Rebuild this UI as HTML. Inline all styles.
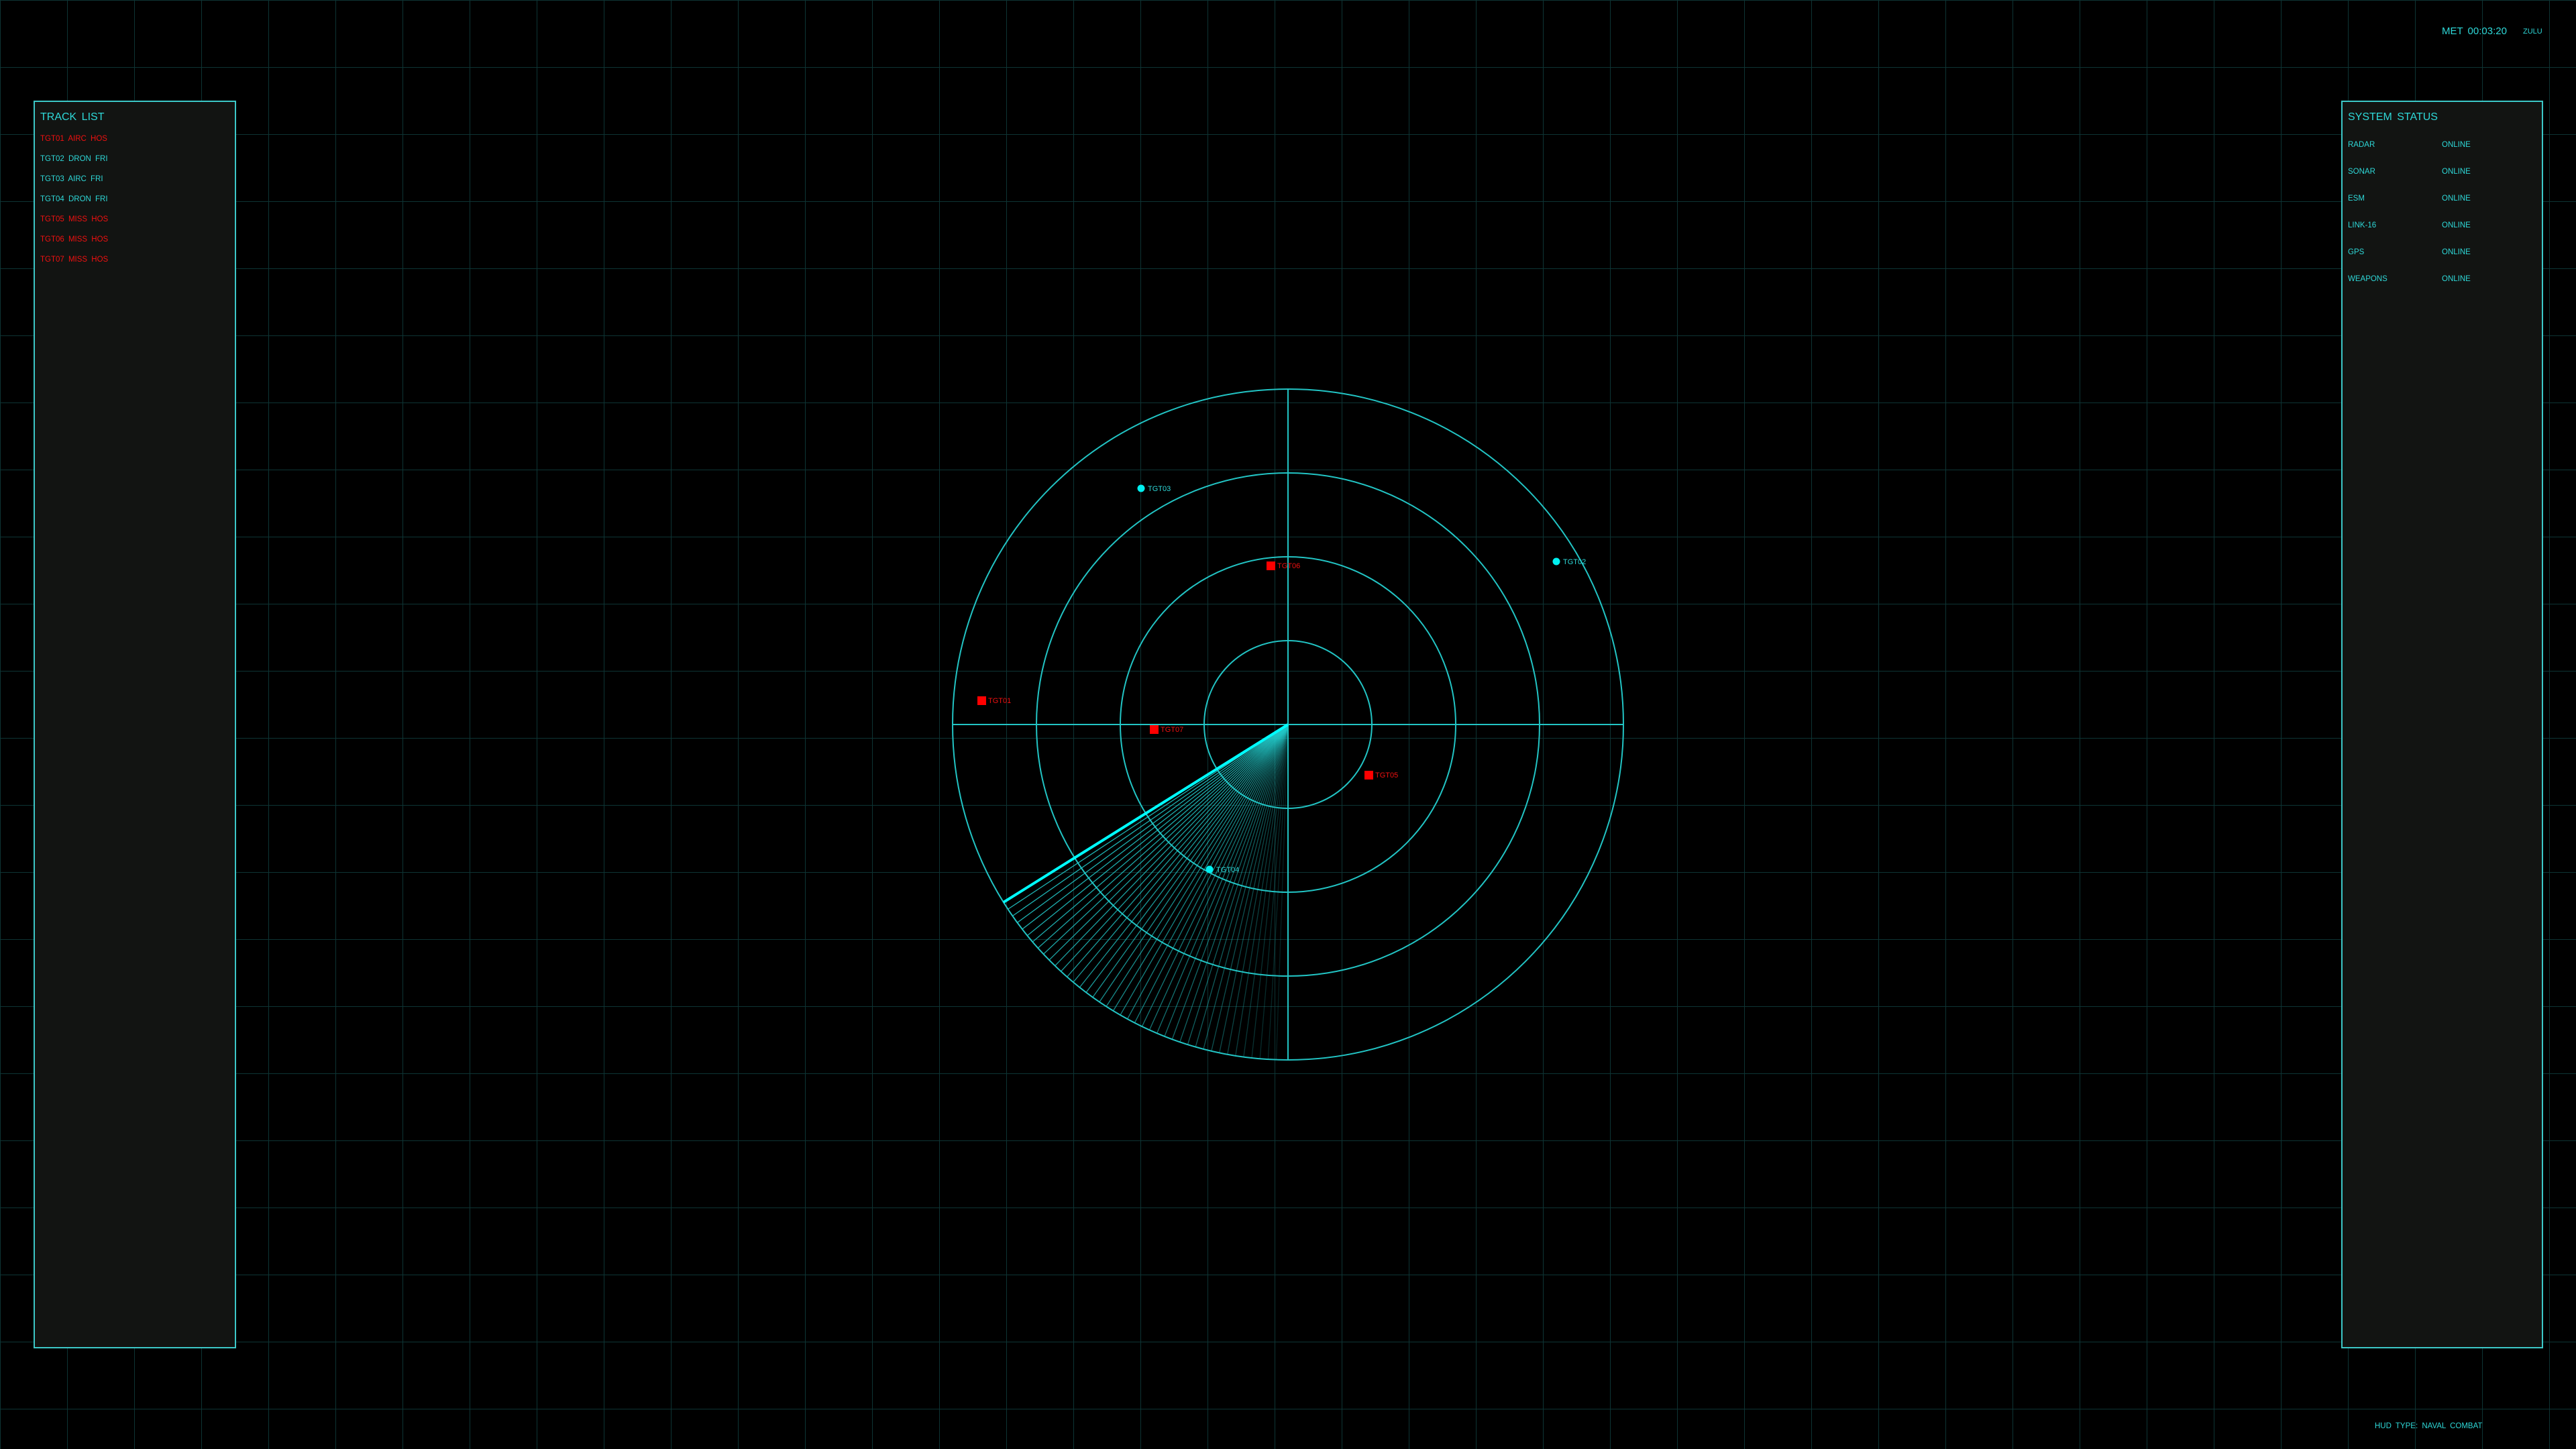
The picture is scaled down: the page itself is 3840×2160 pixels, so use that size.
<!DOCTYPE html>
<html><head><meta charset="utf-8"><style>
html,body{margin:0;padding:0;background:#000;}
body{width:3840px;height:2160px;position:relative;overflow:hidden;font-family:"Liberation Sans","DejaVu Sans",sans-serif;
background-color:#000;
background-image:linear-gradient(to right,#0d3434 1px,transparent 1px),linear-gradient(to bottom,#0d3434 1px,transparent 1px);
background-size:100px 100px;}
.panel{position:absolute;top:150px;height:1860px;background:#121412;border:2px solid #3cc8c8;box-sizing:border-box;}
.t{position:absolute;white-space:nowrap;line-height:1;word-spacing:3px;}
.c{color:#2ed8d8}.r{color:#f01010}
.s{font-size:11.5px;}
</style></head><body>
<div class="panel" style="left:50px;width:302px;"></div>
<div class="panel" style="left:3490px;width:301px;"></div>
<div class="t c" style="left:60px;top:167px;font-size:16px;">TRACK LIST</div>
<div class="t r s" style="left:60px;top:202px;">TGT01 AIRC HOS</div>
<div class="t c s" style="left:60px;top:232px;">TGT02 DRON FRI</div>
<div class="t c s" style="left:60px;top:262px;">TGT03 AIRC FRI</div>
<div class="t c s" style="left:60px;top:292px;">TGT04 DRON FRI</div>
<div class="t r s" style="left:60px;top:322px;">TGT05 MISS HOS</div>
<div class="t r s" style="left:60px;top:352px;">TGT06 MISS HOS</div>
<div class="t r s" style="left:60px;top:382px;">TGT07 MISS HOS</div>

<div class="t c" style="left:3500px;top:167px;font-size:16px;">SYSTEM STATUS</div>
<div class="t c s" style="left:3500px;top:211px;">RADAR</div><div class="t c s" style="left:3640px;top:211px;">ONLINE</div>
<div class="t c s" style="left:3500px;top:251px;">SONAR</div><div class="t c s" style="left:3640px;top:251px;">ONLINE</div>
<div class="t c s" style="left:3500px;top:291px;">ESM</div><div class="t c s" style="left:3640px;top:291px;">ONLINE</div>
<div class="t c s" style="left:3500px;top:331px;">LINK-16</div><div class="t c s" style="left:3640px;top:331px;">ONLINE</div>
<div class="t c s" style="left:3500px;top:371px;">GPS</div><div class="t c s" style="left:3640px;top:371px;">ONLINE</div>
<div class="t c s" style="left:3500px;top:411px;">WEAPONS</div><div class="t c s" style="left:3640px;top:411px;">ONLINE</div>

<div class="t c" style="left:3640px;top:39px;font-size:15px;">MET 00:03:20</div>
<div class="t c" style="left:3761px;top:42px;font-size:11px;">ZULU</div>
<div class="t c s" style="left:3540px;top:2121px;">HUD TYPE: NAVAL COMBAT</div>

<svg width="3840" height="2160" style="position:absolute;left:0;top:0" xmlns="http://www.w3.org/2000/svg">
<g transform="translate(1920,1080)" fill="none" stroke="#22c4c4" stroke-width="2">
<circle r="500"/><circle r="375"/><circle r="250"/><circle r="125"/>
<line x1="-500" y1="0" x2="500" y2="0"/><line x1="0" y1="-500" x2="0" y2="500"/>
<g stroke="#22c8c8" stroke-width="1.3">
<line x2="500" transform="rotate(146.6)" opacity="0.9"/>
<line x2="500" transform="rotate(145.2)" opacity="0.89"/>
<line x2="500" transform="rotate(143.8)" opacity="0.88"/>
<line x2="500" transform="rotate(142.4)" opacity="0.87"/>
<line x2="500" transform="rotate(141.0)" opacity="0.86"/>
<line x2="500" transform="rotate(139.6)" opacity="0.85"/>
<line x2="500" transform="rotate(138.2)" opacity="0.84"/>
<line x2="500" transform="rotate(136.8)" opacity="0.83"/>
<line x2="500" transform="rotate(135.4)" opacity="0.82"/>
<line x2="500" transform="rotate(134.0)" opacity="0.81"/>
<line x2="500" transform="rotate(132.6)" opacity="0.8"/>
<line x2="500" transform="rotate(131.2)" opacity="0.79"/>
<line x2="500" transform="rotate(129.8)" opacity="0.78"/>
<line x2="500" transform="rotate(128.4)" opacity="0.77"/>
<line x2="500" transform="rotate(127.0)" opacity="0.76"/>
<line x2="500" transform="rotate(125.6)" opacity="0.74"/>
<line x2="500" transform="rotate(124.2)" opacity="0.72"/>
<line x2="500" transform="rotate(122.8)" opacity="0.7"/>
<line x2="500" transform="rotate(121.4)" opacity="0.68"/>
<line x2="500" transform="rotate(120.0)" opacity="0.66"/>
<line x2="500" transform="rotate(118.6)" opacity="0.64"/>
<line x2="500" transform="rotate(117.2)" opacity="0.62"/>
<line x2="500" transform="rotate(115.8)" opacity="0.6"/>
<line x2="500" transform="rotate(114.4)" opacity="0.58"/>
<line x2="500" transform="rotate(113.0)" opacity="0.56"/>
<line x2="500" transform="rotate(111.6)" opacity="0.54"/>
<line x2="500" transform="rotate(110.2)" opacity="0.52"/>
<line x2="500" transform="rotate(108.8)" opacity="0.5"/>
<line x2="500" transform="rotate(107.4)" opacity="0.48"/>
<line x2="500" transform="rotate(106.0)" opacity="0.46"/>
<line x2="500" transform="rotate(104.6)" opacity="0.43"/>
<line x2="500" transform="rotate(103.2)" opacity="0.4"/>
<line x2="500" transform="rotate(101.8)" opacity="0.37"/>
<line x2="500" transform="rotate(100.4)" opacity="0.34"/>
<line x2="500" transform="rotate(99.0)" opacity="0.31"/>
<line x2="500" transform="rotate(97.6)" opacity="0.28"/>
<line x2="500" transform="rotate(96.2)" opacity="0.25"/>
<line x2="500" transform="rotate(94.8)" opacity="0.22"/>
<line x2="500" transform="rotate(93.4)" opacity="0.19"/>
<line x2="500" transform="rotate(92.0)" opacity="0.16"/>
</g>
<line x2="500" transform="rotate(148)" stroke="#00ffff" stroke-width="4"/>
</g>
<g font-family="Liberation Sans, DejaVu Sans, sans-serif" font-size="11">
<circle cx="1701" cy="728" r="5.5" fill="#00f0f0"/><text x="1711" y="732" fill="#2ed8d8">TGT03</text>
<circle cx="2320" cy="837" r="5.5" fill="#00f0f0"/><text x="2330" y="841" fill="#2ed8d8">TGT02</text>
<circle cx="1803" cy="1296" r="5.5" fill="#00f0f0"/><text x="1813" y="1300" fill="#2ed8d8">TGT04</text>
<rect x="1888" y="837" width="13" height="13" fill="#ff0000"/><text x="1904" y="847" fill="#f01010">TGT06</text>
<rect x="1457" y="1038" width="13" height="13" fill="#ff0000"/><text x="1473" y="1048" fill="#f01010">TGT01</text>
<rect x="1714" y="1081" width="13" height="13" fill="#ff0000"/><text x="1730" y="1091" fill="#f01010">TGT07</text>
<rect x="2034" y="1149" width="13" height="13" fill="#ff0000"/><text x="2050" y="1159" fill="#f01010">TGT05</text>
</g>
</svg>
</body></html>
